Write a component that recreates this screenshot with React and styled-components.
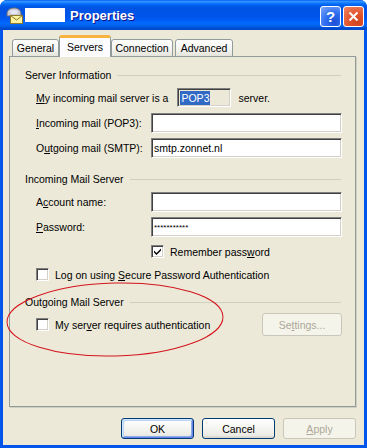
import React from 'react';
import styled, { createGlobalStyle } from 'styled-components';

const GlobalStyle = createGlobalStyle`
  body {
    margin: 0;
    font-family: "Liberation Sans", Arial, sans-serif;
  }
`;

const Window = styled.div`
  position: relative;
  width: 367px;
  height: 448px;
  box-sizing: border-box;
  display: flex;
  flex-direction: column;
  background: #0055ea;
  border-radius: 7px 7px 0 0;
  overflow: hidden;
`;

const TitleBar = styled.div`
  height: 30px;
  flex-shrink: 0;
  display: flex;
  align-items: center;
  padding: 0 3px 0 5px;
  background: linear-gradient(
    to bottom,
    #0058ee 0%,
    #3593ff 4%,
    #288eff 7%,
    #127dff 10%,
    #036ffc 13%,
    #0262ee 17%,
    #0057e5 23%,
    #0054e3 28%,
    #0055eb 56%,
    #005bf5 66%,
    #026afe 76%,
    #0062ef 86%,
    #0052d6 92%,
    #0046c8 100%
  );
`;

const Redacted = styled.div`
  width: 40px;
  height: 14px;
  background: #fff;
  margin-left: 2px;
`;

const TitleText = styled.span`
  margin-left: 5px;
  color: #fff;
  font-weight: bold;
  font-size: 13px;
  text-shadow: 1px 1px 0 #0f1089;
  flex: 1;
`;

const CaptionButtons = styled.div`
  display: flex;
  gap: 2px;
  margin-top: 2px;
`;

const CaptionButton = styled.div`
  width: 21px;
  height: 21px;
  box-sizing: border-box;
  border: 1px solid #fff;
  border-radius: 3px;
  display: flex;
  align-items: center;
  justify-content: center;
  color: #fff;
  font-weight: bold;
  font-size: 15px;
  background: ${(p) =>
    p.$variant === 'close'
      ? 'radial-gradient(circle at 70% 80%, #cc4622 0%, #e2532b 40%, #f08665 100%)'
      : 'radial-gradient(circle at 70% 80%, #1d4fd6 0%, #2f6ef0 45%, #7ea7f8 100%)'};
`;

const Body = styled.div`
  flex: 1;
  display: flex;
  flex-direction: column;
  background: #ece9d8;
  margin: 0 3px 3px 3px;
  padding: 6px 8px 0 6px;
  font-size: 10.5px;
  color: #000;
`;

const TabStrip = styled.div`
  display: flex;
  align-items: flex-end;
  padding-left: 3px;
  height: 21px;
  position: relative;
  z-index: 1;
  margin-bottom: -1px;
`;

const Tab = styled.div`
  box-sizing: border-box;
  width: ${(p) => p.$w}px;
  margin-left: ${(p) => p.$ml || 0}px;
  height: ${(p) => (p.$active ? 22 : 18)}px;
  display: flex;
  align-items: ${(p) => (p.$active ? 'flex-start' : 'center')};
  padding-top: ${(p) => (p.$active ? 3 : 0)}px;
  justify-content: center;
  border: 1px solid #919b9c;
  border-bottom: ${(p) => (p.$active ? 'none' : '1px solid #919b9c')};
  border-radius: 3px 3px 0 0;
  background: ${(p) =>
    p.$active ? '#fcfcfe' : 'linear-gradient(to bottom, #fff 0%, #f3f3ef 60%, #e5e4dc 100%)'};
  border-top: ${(p) => (p.$active ? '3px solid #f8b23f' : '1px solid #919b9c')};
`;

const Panel = styled.div`
  height: 351px;
  box-sizing: border-box;
  border: 1px solid #919b9c;
  box-shadow: 1px 1px 0 #d0cebf;
  background: #ece9d8;
  padding: 11px 13px 0 15px;
`;

const Group = styled.div`
  display: flex;
  flex-direction: column;
  margin-top: ${(p) => p.$mt || 0}px;
`;

const GroupHeader = styled.div`
  display: flex;
  align-items: center;
  height: 14px;
  &::after {
    content: '';
    flex: 1;
    height: 1px;
    background: #d0d0bf;
    margin-left: 6px;
    margin-right: 1px;
  }
`;

const Row = styled.div`
  display: flex;
  align-items: center;
  height: ${(p) => p.$h || 20}px;
  margin-top: ${(p) => p.$mt || 0}px;
  padding-left: ${(p) => p.$indent ?? 11}px;
`;

const Label = styled.span`
  width: 115px;
  flex-shrink: 0;
`;

const Text = styled.span`
  margin-left: ${(p) => p.$ml || 0}px;
  white-space: pre;
`;

const U = styled.span`
  text-decoration: underline;
`;

const Field = styled.div`
  box-sizing: border-box;
  height: ${(p) => p.$h || 20}px;
  flex: ${(p) => (p.$w ? 'none' : 1)};
  width: ${(p) => (p.$w ? `${p.$w}px` : 'auto')};
  margin-left: ${(p) => p.$ml || 0}px;
  background: ${(p) => (p.$readonly ? '#ece9d8' : '#fff')};
  border: 1px solid;
  border-color: #808080 #fff #fff #808080;
  box-shadow: inset 1px 1px 0 #404040, inset -1px -1px 0 #d4d0c8;
  display: flex;
  align-items: center;
  padding-left: 2px;
  font-size: ${(p) => (p.$small ? 8 : 10.5)}px;
`;

const Selected = styled.span`
  background: #316ac5;
  color: #fff;
  padding: 1px 1px;
`;

const Check = styled.div`
  box-sizing: border-box;
  width: 13px;
  height: 13px;
  flex-shrink: 0;
  background: #fff;
  border: 1px solid;
  border-color: #808080 #fff #fff #808080;
  box-shadow: inset 1px 1px 0 #404040, inset -1px -1px 0 #d4d0c8;
  display: flex;
  align-items: center;
  justify-content: center;
  margin-right: 6px;
`;

const Button = styled.div`
  box-sizing: border-box;
  width: ${(p) => p.$w || 73}px;
  height: ${(p) => p.$h || 21}px;
  display: flex;
  align-items: center;
  justify-content: center;
  border-radius: 3px;
  border: 1px solid ${(p) => (p.$disabled ? '#c9c7ba' : '#003c74')};
  color: ${(p) => (p.$disabled ? '#aca899' : '#000')};
  background: ${(p) =>
    p.$disabled ? '#f5f4ea' : 'linear-gradient(to bottom, #fff 0%, #f4f4f0 50%, #ecebe6 85%, #d6d0c5 100%)'};
  box-shadow: ${(p) =>
    p.$default ? 'inset 1px 1px 0 #cee7ff, inset -1px -1px 0 #6982ee, inset 2px 2px 0 #bcd4f6, inset -2px -2px 0 #89ade4' : 'none'};
`;

const ButtonRow = styled.div`
  display: flex;
  justify-content: flex-end;
  gap: 8px;
  margin-top: 11px;
`;

const Spacer = styled.div`
  flex: 1;
`;

const Annotation = styled.svg`
  position: absolute;
  left: 4px;
  top: 280px;
  pointer-events: none;
`;

function TickMark() {
  return (
    <svg width="7" height="7" viewBox="0 0 7 7">
      <path d="M0 2.5 L2.5 5 L7 0.5 L7 2.5 L2.5 7 L0 4.5 Z" fill="#000" />
    </svg>
  );
}

function MailIcon() {
  return (
    <svg width="18" height="17" viewBox="0 0 18 17">
      <path d="M2 7 C2 3 5 1 9 1 C13 1 16 3 16 7 L16 9 L2 9 Z" fill="#c9c9d2" stroke="#6b6b7a" strokeWidth="1" />
      <ellipse cx="9" cy="5" rx="4" ry="2" fill="#eef" opacity="0.8" />
      <rect x="5.5" y="8.5" width="12" height="8" fill="#fbf2a0" stroke="#8a7a2a" />
      <path d="M5.5 8.5 L11.5 13 L17.5 8.5" fill="none" stroke="#8a7a2a" />
    </svg>
  );
}

export default function App() {
  return (
    <>
      <GlobalStyle />
      <Window>
        <TitleBar>
          <MailIcon />
          <Redacted />
          <TitleText>Properties</TitleText>
          <CaptionButtons>
            <CaptionButton $variant="help">?</CaptionButton>
            <CaptionButton $variant="close">
              <svg width="11" height="11" viewBox="0 0 11 11">
                <path d="M1.5 1.5 L9.5 9.5 M9.5 1.5 L1.5 9.5" stroke="#fff" strokeWidth="2" />
              </svg>
            </CaptionButton>
          </CaptionButtons>
        </TitleBar>
        <Body>
          <TabStrip>
            <Tab $w={47}>General</Tab>
            <Tab $w={52} $active>Servers</Tab>
            <Tab $w={62}>Connection</Tab>
            <Tab $w={58} $ml={2}>Advanced</Tab>
          </TabStrip>
          <Panel>
            <Group>
              <GroupHeader>Server Information</GroupHeader>
              <Row $h={19} $mt={6}>
                <Text>
                  <U>M</U>y incoming mail server is a
                </Text>
                <Field $w={54} $h={19} $ml={9} $readonly>
                  <Selected>POP3</Selected>
                </Field>
                <Text $ml={7}>server.</Text>
              </Row>
              <Row $mt={6}>
                <Label>
                  <U>I</U>ncoming mail (POP3):
                </Label>
                <Field />
              </Row>
              <Row $mt={5}>
                <Label>
                  O<U>u</U>tgoing mail (SMTP):
                </Label>
                <Field>smtp.zonnet.nl</Field>
              </Row>
            </Group>
            <Group $mt={14}>
              <GroupHeader>Incoming Mail Server</GroupHeader>
              <Row $mt={6}>
                <Label>
                  A<U>c</U>count name:
                </Label>
                <Field />
              </Row>
              <Row $mt={5}>
                <Label>
                  <U>P</U>assword:
                </Label>
                <Field $small>***********</Field>
              </Row>
              <Row $h={13} $mt={8} $indent={126}>
                <Check>
                  <TickMark />
                </Check>
                <Text>
                  Remember pass<U>w</U>ord
                </Text>
              </Row>
              <Row $h={13} $mt={10}>
                <Check />
                <Text>
                  Log on using <U>S</U>ecure Password Authentication
                </Text>
              </Row>
            </Group>
            <Group $mt={14}>
              <GroupHeader>Outgoing Mail Server</GroupHeader>
              <Row $h={23} $mt={4}>
                <Check />
                <Text>
                  My ser<U>v</U>er requires authentication
                </Text>
                <Spacer />
                <Button $disabled $w={80} $h={23}>
                  Se<U>t</U>tings...
                </Button>
              </Row>
            </Group>
          </Panel>
          <ButtonRow>
            <Button $default>OK</Button>
            <Button>Cancel</Button>
            <Button $disabled>
              <U>A</U>pply
            </Button>
          </ButtonRow>
        </Body>
        <Annotation width="224" height="80" viewBox="0 0 224 80">
          <ellipse
            cx="111"
            cy="39.5"
            rx="108"
            ry="36.5"
            fill="none"
            stroke="#d4141c"
            strokeWidth="1"
            transform="rotate(-1.5 111 39.5)"
          />
        </Annotation>
      </Window>
    </>
  );
}
